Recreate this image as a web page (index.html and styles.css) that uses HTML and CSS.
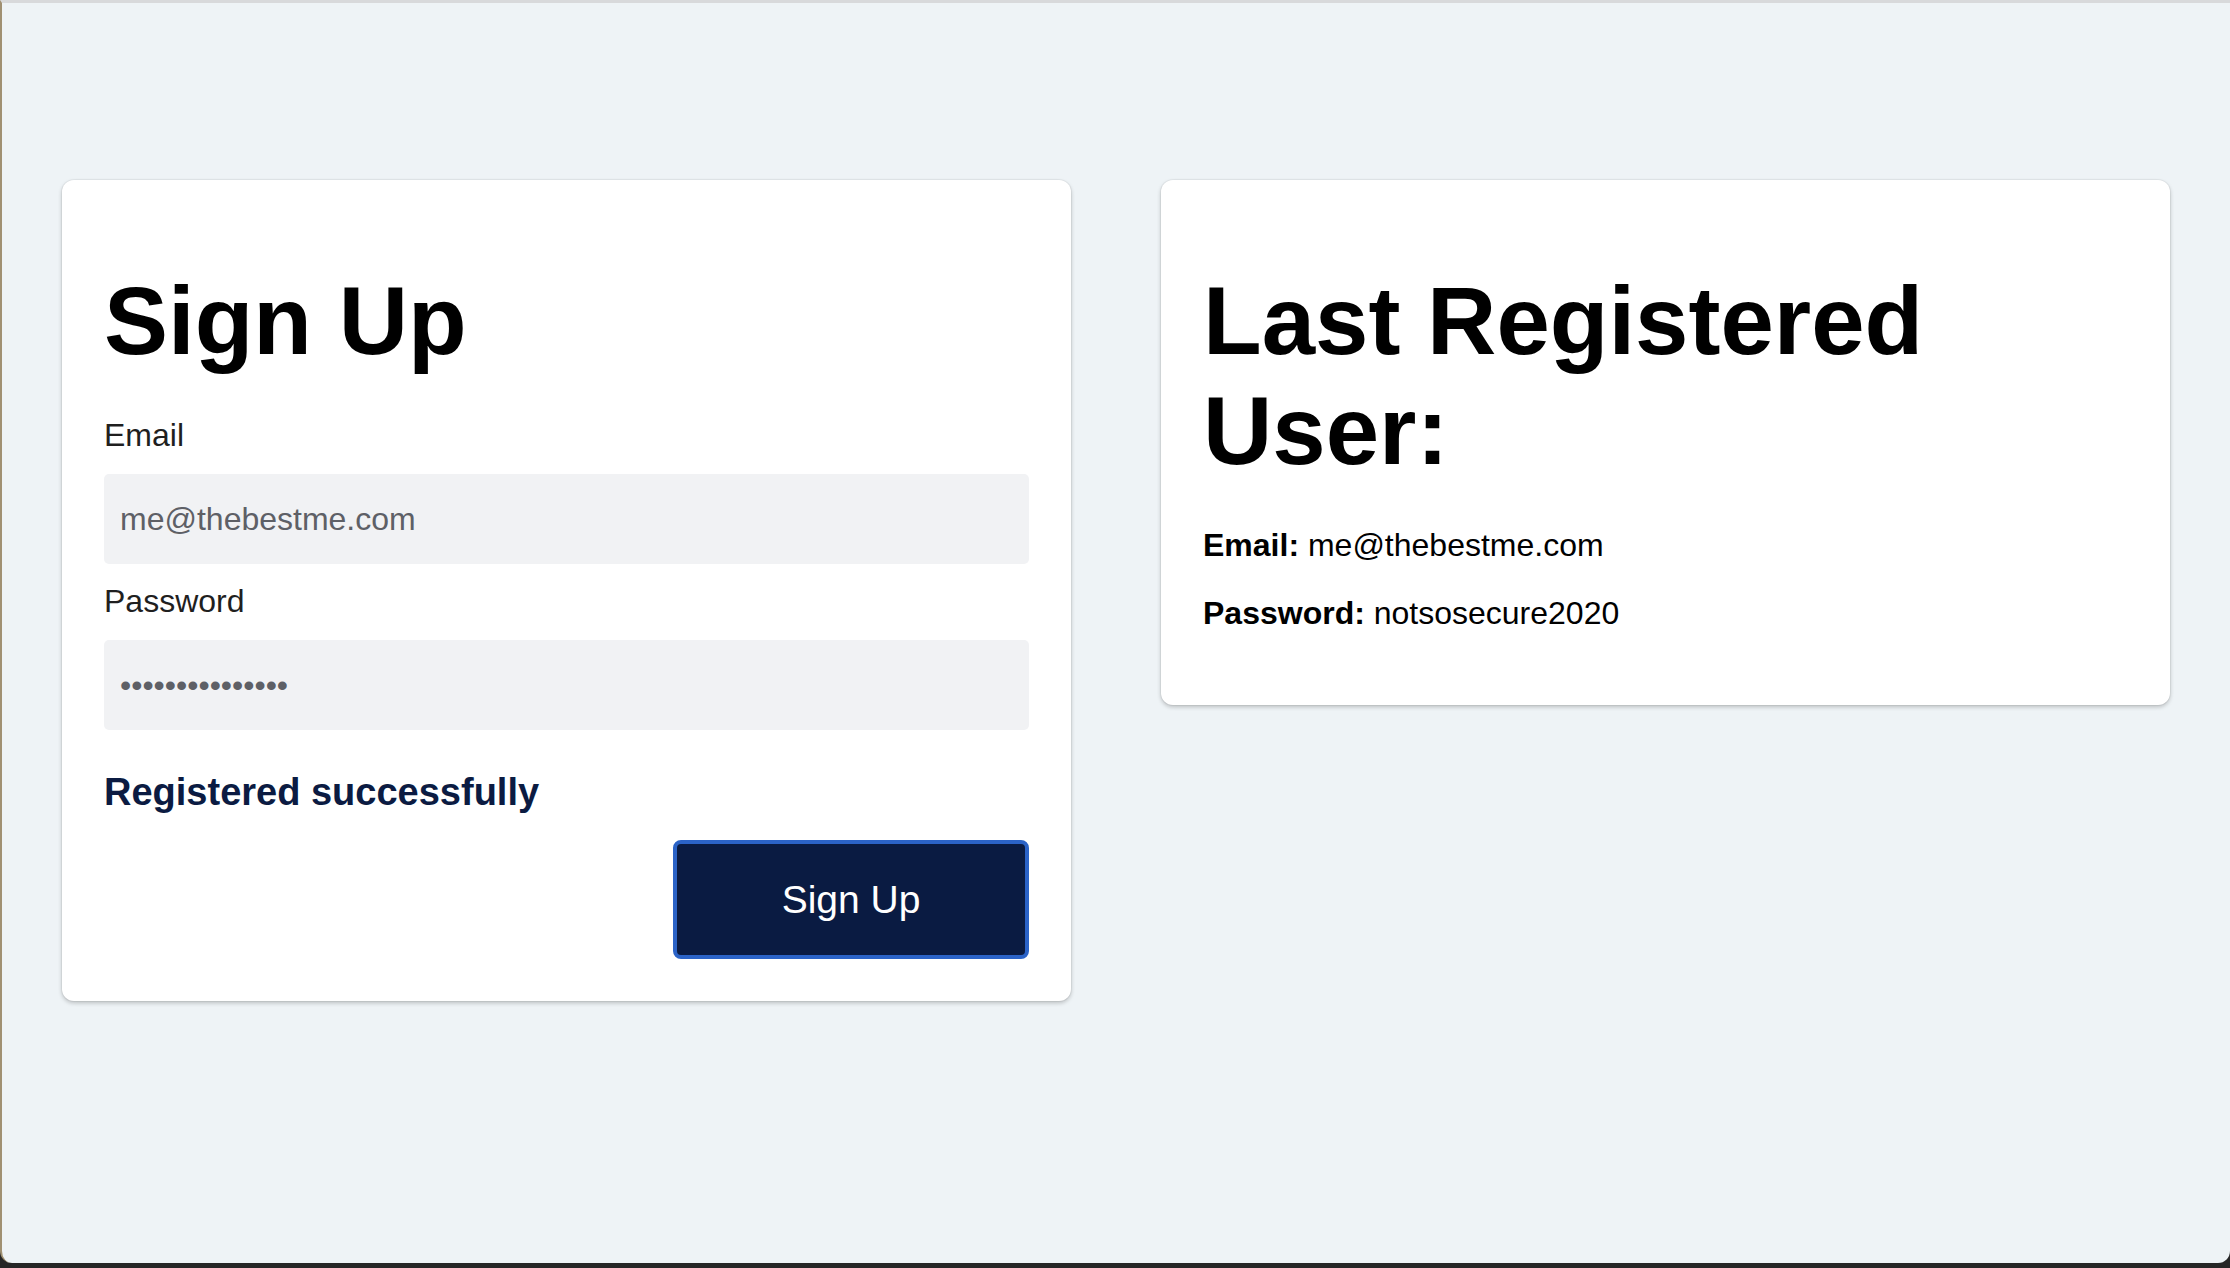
FILE: index.html
```html
<!DOCTYPE html>
<html lang="en">
<head>
<meta charset="utf-8">
<title>Sign Up</title>
<link rel="stylesheet" href="styles.css">
</head>
<body>
<div class="window">
  <main class="layout">
    <section class="card">
      <h1 class="title">Sign Up</h1>
      <form class="form">
        <label class="label" for="email">Email</label>
        <input class="field field-gap" id="email" type="email" value="me@thebestme.com">
        <label class="label" for="password">Password</label>
        <input class="field" id="password" type="password" value="notsosecure2020">
        <p class="status">Registered successfully</p>
        <div class="actions">
          <button class="btn" type="button">Sign Up</button>
        </div>
      </form>
    </section>
    <section class="card">
      <h1 class="title">Last Registered User:</h1>
      <div class="info">
        <p class="info-row"><strong>Email:</strong> me@thebestme.com</p>
        <p class="info-row info-last"><strong>Password:</strong> notsosecure2020</p>
      </div>
    </section>
  </main>
</div>
</body>
</html>
```

FILE: styles.css
```css
html, body {
  margin: 0;
  padding: 0;
}

body {
  background: #262626;
  height: 1268px;
  overflow: hidden;
  font-family: "Liberation Sans", Arial, Helvetica, sans-serif;
}

.window {
  box-sizing: border-box;
  height: 1263px;
  background: #eef3f6;
  border-top: 3px solid #d8d9db;
  border-left: 2px solid #a09072;
  border-radius: 0 0 12px 12px;
  padding: 177px 60px 0 60px;
}

.layout {
  display: grid;
  grid-template-columns: 1fr 1fr;
  column-gap: 90px;
  align-items: start;
}

.card {
  background: #ffffff;
  border-radius: 12px;
  padding: 42px;
  box-shadow: 0 0 0 1px rgba(0, 0, 0, 0.04), 0 2px 4px rgba(0, 0, 0, 0.22);
}

.title {
  margin: 44px 0 35px 0;
  font-size: 96px;
  line-height: 110px;
  font-weight: 700;
  color: #000;
}

.form {
  display: flex;
  flex-direction: column;
}

.label {
  display: block;
  font-size: 32px;
  line-height: 48px;
  color: #1f1f1f;
  margin-bottom: 15px;
}

.field {
  box-sizing: border-box;
  width: 100%;
  height: 90px;
  border: none;
  outline: none;
  border-radius: 5px;
  background: #f1f2f4;
  padding: 0 16px;
  font-family: "Liberation Sans", Arial, Helvetica, sans-serif;
  font-size: 32px;
  color: #5e6066;
}

.field-gap {
  margin-bottom: 13px;
}

.status {
  margin: 34px 0 19px 0;
  font-size: 38px;
  line-height: 57px;
  font-weight: 700;
  color: #0b1b42;
}

.actions {
  display: flex;
  justify-content: flex-end;
}

.btn {
  box-sizing: border-box;
  width: 356px;
  height: 119px;
  background: #0a1b42;
  border: 4px solid #2b63c7;
  border-radius: 8px;
  color: #ffffff;
  font-family: "Liberation Sans", Arial, Helvetica, sans-serif;
  font-size: 39px;
  cursor: pointer;
}

.info-row {
  margin: 0 0 20px 0;
  font-size: 32px;
  line-height: 48px;
  color: #000;
}

.info-last {
  margin-bottom: 26px;
}
```
